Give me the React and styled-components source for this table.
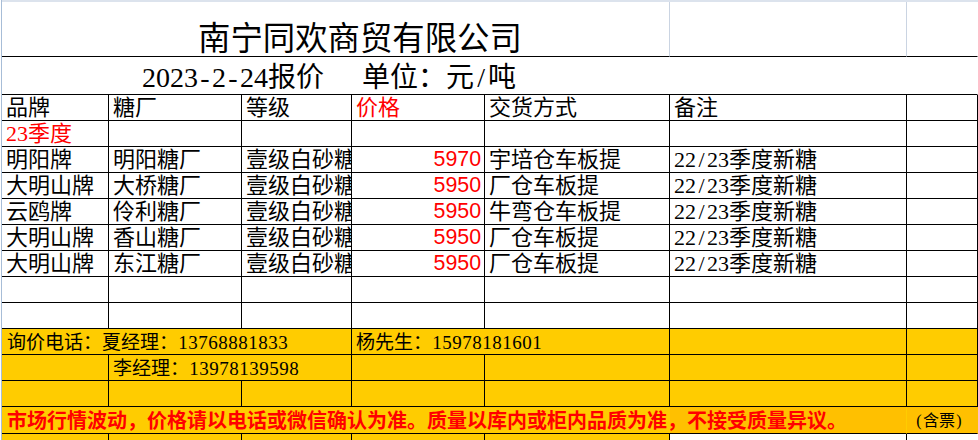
import React from 'react';
import styled, { createGlobalStyle } from 'styled-components';

const GlobalStyle = createGlobalStyle`
  html, body { margin: 0; padding: 0; background: #ffffff; overflow: hidden; }
  body { font-family: "Liberation Serif", "Noto Sans CJK SC", serif; color: #000; }
`;

const YELLOW = '#FFCC00';
const ORANGE = '#FFC000';
const RED = '#FF0000';
const LIGHT = '#CAD4E2';

const Page = styled.div`
  width: 978px;
  height: 440px;
  overflow: hidden;
  display: flex;
  background: #fff;
`;

const EdgeLine = styled.div`
  width: 1px;
  margin-left: 1px;
  background: #A7BDD7;
  flex: none;
`;

const Sheet = styled.div`
  flex: 1;
  display: flex;
  flex-direction: column;
  min-width: 0;
`;

const TopStrip = styled.div`
  height: 2px;
  flex: none;
  background: #DCE3ED;
`;

const Row = styled.div`
  display: grid;
  grid-template-columns: 107px 133px 110px 133px 185px 237px 1fr;
  height: ${(p) => p.$h || 26}px;
  flex: none;
  background: ${(p) => p.$bg || '#ffffff'};
`;

const borderColor = (v) => (v === 'black' ? '#000' : v === 'light' ? LIGHT : 'transparent');

const Cell = styled.div`
  grid-column: span ${(p) => p.$span || 1};
  box-sizing: border-box;
  border-right: 1px solid ${(p) => borderColor(p.$right ?? 'black')};
  border-bottom: 1px solid ${(p) => borderColor(p.$bottom ?? 'black')};
  background: ${(p) => p.$bg || 'transparent'};
  display: flex;
  align-items: ${(p) => p.$valign || 'center'};
  justify-content: ${(p) => (p.$align === 'right' ? 'flex-end' : 'flex-start')};
  padding: ${(p) => p.$pad || '1px 3px 0 4px'};
  overflow: hidden;
  white-space: nowrap;
  font-size: ${(p) => p.$size || 22}px;
  line-height: 1;
  color: ${(p) => p.$color || '#000'};
  font-weight: ${(p) => (p.$bold ? 700 : 400)};
`;

const Text = styled.span`
  display: block;
  line-height: 1;
  white-space: nowrap;
`;

const Title = styled.span`
  display: block;
  font-size: 32.4px;
  line-height: 1;
`;

const SubTitle = styled.span`
  font-size: 28px;
  line-height: 1;
  display: flex;
  gap: 38px;
`;

const Price = styled.span`
  display: block;
  font-family: "Liberation Sans", Arial, sans-serif;
  font-size: 21.33px;
  line-height: 1;
  color: ${RED};
`;

/* half-width character cell, emulating the fixed half-width Latin of the sheet font */
const Ch = styled.span`
  display: inline-block;
  width: ${(p) => p.$w}px;
  text-align: center;
`;

const Latin = ({ text, w }) =>
  text.split('').map((c, i) => (
    <Ch key={i} $w={w}>
      {c}
    </Ch>
  ));

const data = [
  ['明阳牌', '明阳糖厂', '壹级白砂糖', '5970', '宇培仓车板提'],
  ['大明山牌', '大桥糖厂', '壹级白砂糖', '5950', '厂仓车板提'],
  ['云鸥牌', '伶利糖厂', '壹级白砂糖', '5950', '牛弯仓车板提'],
  ['大明山牌', '香山糖厂', '壹级白砂糖', '5950', '厂仓车板提'],
  ['大明山牌', '东江糖厂', '壹级白砂糖', '5950', '厂仓车板提'],
];

const EmptyRow = ({ bg }) => (
  <Row $bg={bg}>
    {Array.from({ length: 7 }).map((_, i) => (
      <Cell key={i} />
    ))}
  </Row>
);

export default function App() {
  return (
    <Page>
      <GlobalStyle />
      <EdgeLine />
      <Sheet>
        <TopStrip />
        <Row $h={55}>
          <Cell $span={5} $right="light" $valign="flex-end" $pad="0 0 1px 196px">
            <Title>南宁同欢商贸有限公司</Title>
          </Cell>
          <Cell $right="light" />
          <Cell $right="none" />
        </Row>
        <Row $h={38}>
          <Cell $span={7} $right="none" $valign="flex-end" $pad="0 0 2px 140px">
            <SubTitle>
              <span>
                <Latin text="2023-2-24" w={14} />
                报价
              </span>
              <span>
                单位：元<Ch $w={14}>/</Ch>吨
              </span>
            </SubTitle>
          </Cell>
        </Row>
        <Row>
          <Cell><Text>品牌</Text></Cell>
          <Cell><Text>糖厂</Text></Cell>
          <Cell><Text>等级</Text></Cell>
          <Cell $color={RED}><Text>价格</Text></Cell>
          <Cell><Text>交货方式</Text></Cell>
          <Cell><Text>备注</Text></Cell>
          <Cell />
        </Row>
        <Row>
          <Cell $color={RED}>
            <Text>
              <Latin text="23" w={11} />
              季度
            </Text>
          </Cell>
          <Cell />
          <Cell />
          <Cell />
          <Cell />
          <Cell />
          <Cell />
        </Row>
        {data.map((r, i) => (
          <Row key={i}>
            <Cell><Text>{r[0]}</Text></Cell>
            <Cell><Text>{r[1]}</Text></Cell>
            <Cell><Text>{r[2]}</Text></Cell>
            <Cell $align="right" $pad="1px 3px 0 3px">
              <Price>{r[3]}</Price>
            </Cell>
            <Cell><Text>{r[4]}</Text></Cell>
            <Cell>
              <Text>
                <Latin text="22/23" w={11} />
                季度新糖
              </Text>
            </Cell>
            <Cell />
          </Row>
        ))}
        <EmptyRow />
        <EmptyRow />
        <Row $bg={YELLOW}>
          <Cell $span={3} $size={19} $pad="2px 3px 0 5px">
            <Text>
              询价电话：夏经理：<Latin text="13768881833" w={10} />
            </Text>
          </Cell>
          <Cell $span={2} $size={19} $pad="2px 3px 0 4px">
            <Text>
              杨先生：<Latin text="15978181601" w={10} />
            </Text>
          </Cell>
          <Cell />
          <Cell />
        </Row>
        <Row $bg={YELLOW}>
          <Cell />
          <Cell $span={2} $size={19} $pad="2px 3px 0 4px">
            <Text>
              李经理：<Latin text="13978139598" w={10} />
            </Text>
          </Cell>
          <Cell />
          <Cell />
          <Cell />
          <Cell />
        </Row>
        <EmptyRow bg={YELLOW} />
        <Row $h={27} $bg={ORANGE}>
          <Cell
            $span={6}
            $right="none"
            $bold
            $color={RED}
            $size={20}
            $bg={`linear-gradient(to right, ${YELLOW} 668px, ${ORANGE} 668px)`}
            $pad="2px 3px 0 5px"
          >
            <Text>市场行情波动，价格请以电话或微信确认为准。质量以库内或柜内品质为准，不接受质量异议。</Text>
          </Cell>
          <Cell $right="none" $size={16} $pad="2px 3px 0 8px">
            <Text>
              <Ch $w={8}>(</Ch>含票<Ch $w={8}>)</Ch>
            </Text>
          </Cell>
        </Row>
        <Row $h={30}>
          <Cell $bg={YELLOW} $bottom="none" />
          <Cell $bg={YELLOW} $bottom="none" />
          <Cell $bg={YELLOW} $bottom="none" />
          <Cell $bg={YELLOW} $bottom="none" />
          <Cell $bg={YELLOW} $bottom="none" />
          <Cell $bottom="none" />
          <Cell $bottom="none" $right="none" />
        </Row>
      </Sheet>
    </Page>
  );
}
